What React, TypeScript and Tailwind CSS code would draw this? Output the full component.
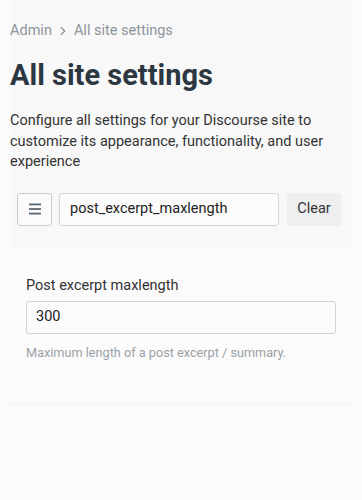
import React from "react";

export default function App() {
  return (
    <div
      className="w-[362px] h-[500px] bg-[#fbfbfb] text-[#222] overflow-hidden"
      style={{ fontFamily: "Roboto, 'Noto Sans', sans-serif" }}
    >
      <div className="px-[10px]">
        <div className="bg-[#f8f8f8] pt-[21px] pb-[22px]">
          <div className="flex items-center text-[14.5px] text-[#8c949c] leading-[20px]">
            <span>Admin</span>
            <svg width="14" height="14" viewBox="0 0 24 24" className="mx-[4px]" fill="none" stroke="#8c949c" strokeWidth="2.2" strokeLinecap="round" strokeLinejoin="round">
              <path d="M9 6l6 6-6 6" />
            </svg>
            <span>All site settings</span>
          </div>
          <h1 className="mt-[16px] text-[29px] font-bold leading-[36px] text-[#2d3741]">All site settings</h1>
          <p className="mt-[18px] text-[14.5px] leading-[20.5px] text-[#333]">
            Configure all settings for your Discourse site to customize its appearance, functionality, and user experience
          </p>
          <div className="mt-[20px] px-[7px] flex items-center">
            <button className="w-[35px] h-[33px] border border-[#c8ccd0] rounded-[3px] bg-[#fbfbfb] flex items-center justify-center">
              <svg width="14" height="12" viewBox="0 0 14 12">
                <rect x="1" y="0.5" width="12" height="1.8" fill="#5b6874" />
                <rect x="1" y="5.1" width="12" height="1.8" fill="#5b6874" />
                <rect x="1" y="9.7" width="12" height="1.8" fill="#5b6874" />
              </svg>
            </button>
            <div className="ml-[7px] w-[220px] h-[33px] border border-[#d4d7da] rounded-[3px] bg-[#fbfbfb] flex items-center px-[10px] text-[14.5px] text-[#222]">
              post_excerpt_maxlength
            </div>
            <button className="ml-[8px] w-[54px] h-[33px] rounded-[3px] bg-[#eeeff0] text-[14.5px] text-[#333]">Clear</button>
          </div>
        </div>
        <div className="px-[16px] pt-[28px]">
          <div className="text-[14.5px] leading-[20px] text-[#333]">Post excerpt maxlength</div>
          <div className="mt-[5px] h-[33px] border border-[#cfd3d6] rounded-[3px] bg-[#fbfbfb] flex items-center px-[9px] text-[14.5px] text-[#222]">
            300
          </div>
          <div className="mt-[10px] text-[12.7px] leading-[18px] text-[#9aa1a8]">Maximum length of a post excerpt / summary.</div>
        </div>
        <div className="mt-[40px] h-[5px] bg-[#f7f7f7]" />
      </div>
    </div>
  );
}
